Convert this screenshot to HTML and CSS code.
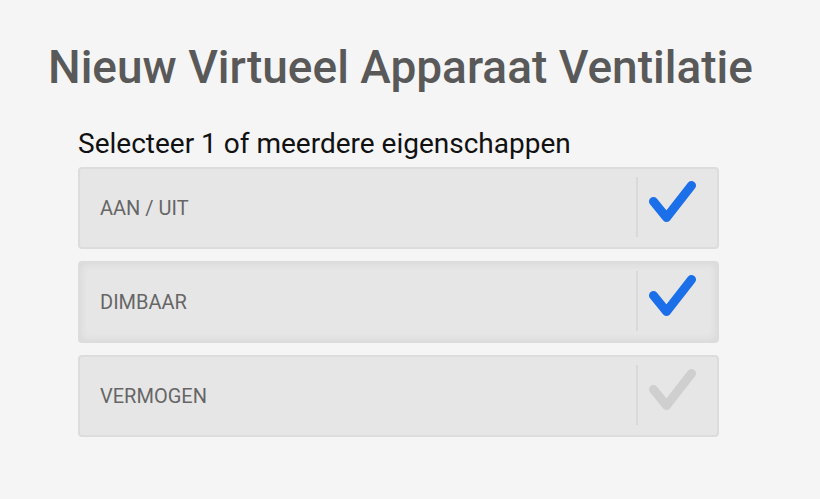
FILE: index.html
```html
<!DOCTYPE html>
<html>
<head>
<meta charset="utf-8">
<link rel="stylesheet" href="styles.css">
</head>
<body>
<div class="page">
  <h1 class="title">Nieuw Virtueel Apparaat Ventilatie</h1>
  <div class="section">
    <div class="subtitle">Selecteer 1 of meerdere eigenschappen</div>
    <div class="list">
      <div class="row">
        <span class="label">AAN / UIT</span>
        <span class="sep"></span>
        <span class="check on"><svg viewBox="0 0 50 44" width="50" height="44"><path d="M6.5 21.5 L19.5 37.5 L44.5 5.5" fill="none" stroke="currentColor" stroke-width="9" stroke-linecap="round" stroke-linejoin="round"/></svg></span>
      </div>
      <div class="row pressed">
        <span class="label">DIMBAAR</span>
        <span class="sep"></span>
        <span class="check on"><svg viewBox="0 0 50 44" width="50" height="44"><path d="M6.5 21.5 L19.5 37.5 L44.5 5.5" fill="none" stroke="currentColor" stroke-width="9" stroke-linecap="round" stroke-linejoin="round"/></svg></span>
      </div>
      <div class="row">
        <span class="label">VERMOGEN</span>
        <span class="sep"></span>
        <span class="check off"><svg viewBox="0 0 50 44" width="50" height="44"><path d="M6.5 21.5 L19.5 37.5 L44.5 5.5" fill="none" stroke="currentColor" stroke-width="9" stroke-linecap="round" stroke-linejoin="round"/></svg></span>
      </div>
    </div>
  </div>
</div>
</body>
</html>
```
FILE: styles.css
```css
html, body {
  margin: 0;
  padding: 0;
  background: #f5f5f5;
  font-family: Roboto, "Liberation Sans", sans-serif;
}
.page {
  padding: 39px 0 0 48px;
}
.title {
  margin: 0;
  font-size: 46px;
  font-weight: 500;
  color: #595959;
  line-height: 56px;
}
.section {
  margin: 33px 0 0 30px;
  width: 641px;
}
.subtitle {
  font-size: 28px;
  color: #111;
  line-height: 32px;
  margin-bottom: 7px;
}
.list {
  display: flex;
  flex-direction: column;
  gap: 12px;
}
.row {
  display: flex;
  align-items: center;
  height: 78px;
  border: 2px solid #dcdcdc;
  border-radius: 4px;
  background: #e6e6e6;
}
.row.pressed {
  box-shadow: inset 0 0 10px rgba(0,0,0,0.07);
}
.label {
  flex: 1;
  padding-left: 20px;
  font-size: 20px;
  color: #666;
}
.sep {
  width: 2px;
  height: 60px;
  background: #d9d9d9;
  margin-bottom: 2px;
}
.check {
  width: 70px;
  padding-left: 9px;
  display: flex;
  margin-bottom: 12px;
}
.check.on { color: #1b6fe8; }
.check.off { color: #cfcfcf; }
```
